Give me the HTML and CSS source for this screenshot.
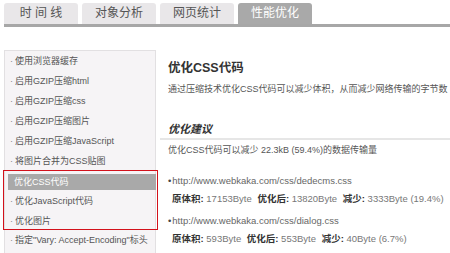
FILE: index.html
```html
<!DOCTYPE html>
<html lang="zh-CN">
<head>
  <meta charset="UTF-8" />
  <title>性能优化</title>
  <link rel="stylesheet" href="styles.css">
</head>
<body>
  <div class="tabs">
    <div class="tab">时 间 线</div>
    <div class="tab">对象分析</div>
    <div class="tab">网页统计</div>
    <div class="tab active">性能优化</div>
  </div>
  <div class="tab-bar"></div>

  <div class="main">
    <ul class="side">
      <li>使用浏览器缓存</li>
      <li>启用GZIP压缩html</li>
      <li>启用GZIP压缩css</li>
      <li>启用GZIP压缩图片</li>
      <li>启用GZIP压缩JavaScript</li>
      <li>将图片合并为CSS贴图</li>
      <li class="mark">
        <ul>
          <li class="current">优化CSS代码</li>
          <li>优化JavaScript代码</li>
          <li>优化图片</li>
        </ul>
      </li>
      <li>指定"Vary: Accept-Encoding"标头</li>
    </ul>

    <div class="content">
      <h2>优化CSS代码</h2>
      <p class="desc">通过压缩技术优化CSS代码可以减少体积，从而减少网络传输的字节数</p>

      <h3>优化建议</h3>
      <p class="summary">优化CSS代码可以减少 22.3kB (59.4%)的数据传输量</p>

      <div class="file">
        <div class="url">http://www.webkaka.com/css/dedecms.css</div>
        <div class="stats"><b>原体积:</b> 17153Byte <b>优化后:</b> 13820Byte <b>减少:</b> 3333Byte (19.4%)</div>
      </div>
      <div class="file">
        <div class="url">http://www.webkaka.com/css/dialog.css</div>
        <div class="stats"><b>原体积:</b> 593Byte <b>优化后:</b> 553Byte <b>减少:</b> 40Byte (6.7%)</div>
      </div>
    </div>
  </div>
</body>
</html>
```

FILE: styles.css
```css
* {
  box-sizing: border-box;
  margin: 0;
  padding: 0;
}
body {
  font-family: 'Liberation Sans', 'Noto Sans CJK SC', sans-serif;
  font-size: 9px;
  color: #555;
  background: #fff;
  width: 450px;
  height: 253px;
  overflow: hidden;
}
.tabs {
  display: flex;
  gap: 4px;
  padding: 3px 0 0 4px;
}
.tab {
  width: 74px;
  height: 21px;
  line-height: 21px;
  text-align: center;
  background: #e9e7e9;
  color: #555;
  font-size: 12px;
  border-radius: 3px 3px 0 0;
}
.tab.active {
  background: #a9a9a9;
  color: #fff;
}
.tab-bar {
  height: 3px;
  margin-left: 4px;
  background: #a7a7a7;
}
.main {
  display: flex;
  padding: 23px 0 0 4px;
  gap: 12px;
}
.side {
  list-style: none;
  width: 152px;
  height: 210px;
  background: #f6f4f6;
  border: 1px solid #e2e0e2;
  border-bottom: none;
  color: #555;
}
.side li {
  height: 20px;
  line-height: 20px;
  padding-left: 5px;
  white-space: nowrap;
}
.side li::before {
  content: "·";
  color: #888;
  margin-right: 2px;
}
.side li.mark {
  height: 60px;
  padding: 0;
  margin: -1px -3px 0 -2px;
  border: 1px solid #d3111b;
}
.side li.mark::before {
  content: none;
}
.side li.mark li {
  padding-left: 6px;
}
.side li.current {
  height: 16px;
  line-height: 16px;
  margin: 3px 1px 1px 4px;
  padding-left: 2px;
  background: #a9a9a9;
  color: #fff;
}
.side li.current::before {
  content: none;
}
.content {
  flex: 1;
}
h2 {
  font-size: 12.5px;
  color: #333;
  margin-top: 8px;
  line-height: 20px;
}
.desc {
  margin-top: 2px;
  line-height: 18px;
  white-space: nowrap;
}
h3 {
  margin: 23px 0 0 -8px;
  padding: 0 0 1px 8px;
  font-size: 11px;
  font-style: italic;
  color: #333;
  line-height: 16px;
  border-bottom: 2px solid #e6e6e6;
}
.summary {
  line-height: 18px;
  margin-top: 1px;
}
.file {
  margin-top: 4px;
}
.summary + .file {
  margin-top: 13px;
}
.url {
  font-size: 9.5px;
  line-height: 18px;
  padding-left: 4px;
  color: #666;
}
.url::before {
  content: "•";
  color: #444;
  margin-left: -4px;
  margin-right: 1px;
}
.stats {
  font-size: 9.5px;
  line-height: 18px;
  padding-left: 4px;
  color: #777;
}
.stats b {
  color: #333;
  margin-left: 3px;
}
.stats b:first-child {
  margin-left: 0;
}
```
